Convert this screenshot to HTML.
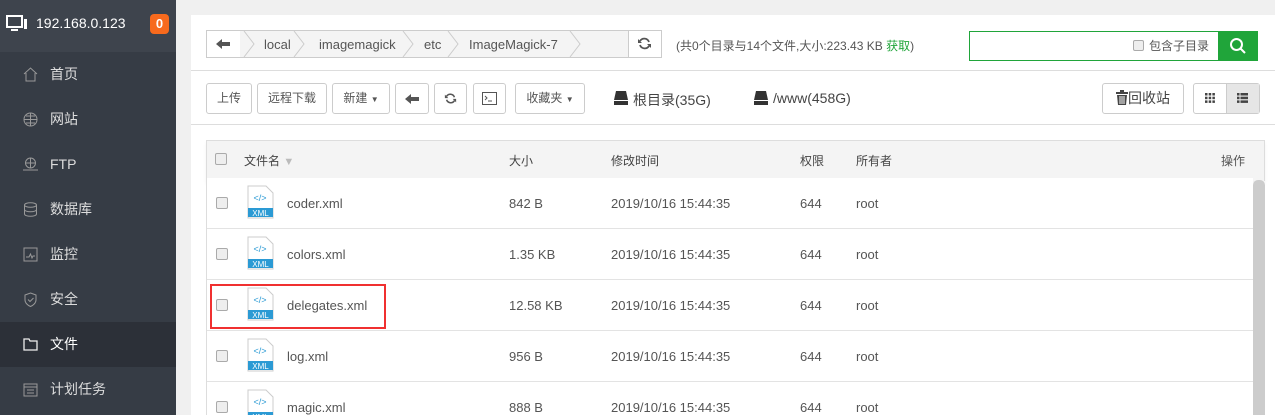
<!DOCTYPE html><html><head><meta charset="utf-8"><style>
*{box-sizing:border-box;margin:0;padding:0}
html,body{width:1275px;height:415px;overflow:hidden}
body{background:#f0f0f0;font-family:"Liberation Sans","Noto Sans CJK SC",sans-serif;font-size:12px;color:#555;position:relative}
.abs{position:absolute}
#side{left:0;top:0;width:176px;height:415px;background:#363c45}
#sh{left:0;top:0;width:176px;height:52px;background:#3e444d;color:#fff;font-size:14px}
.nav{left:0;width:176px;height:45px;color:#ddd;font-size:14px;line-height:45px;padding-left:50px}
.nav.on{background:#2c3038;color:#fff}
.ic{position:absolute;left:23px;top:15px;width:15px;height:15px}
#panel{left:191px;top:15px;width:1084px;height:400px;background:#fff}
.btn{position:absolute;top:83px;height:31px;border:1px solid #ccc;border-radius:3px;background:#fff;line-height:29px;text-align:center;color:#555;font-size:12px}
.hr{left:191px;width:1084px;height:1px;background:#ddd}
.row{left:207px;width:1046px;height:51px;border-bottom:1px solid #e3e3e3;background:#fff}
.cb{position:absolute;left:9px;width:12px;height:12px;border:1px solid #aaa;border-radius:2px;background:#eee}
.cell{position:absolute;line-height:51px;font-size:13px;color:#555}
.xml{position:absolute;left:40px;top:7px;width:28px;height:34px}
</style></head><body>
<div id="side" class="abs"></div>
<div id="sh" class="abs">
<svg class="abs" style="left:6px;top:15px" width="22" height="18"><rect x="1" y="1" width="15" height="11" fill="none" stroke="#fff" stroke-width="2"/><rect x="5" y="14" width="7" height="2" fill="#fff"/><rect x="18" y="4" width="3" height="10" fill="#fff"/></svg>
<div class="abs" style="left:36px;top:15px">192.168.0.123</div>
<div class="abs" style="left:150px;top:14px;width:19px;height:20px;background:#f76a1d;border-radius:4px;text-align:center;line-height:20px;font-weight:bold;font-size:13px">0</div>
</div>
<div class="abs nav" style="top:52px"><svg class="ic" viewBox="0 0 15 15"><path d="M1 7L7.5 1L14 7M3 6v8h9V6" fill="none" stroke="#999"/></svg>首页</div>
<div class="abs nav" style="top:97px"><svg class="ic" viewBox="0 0 15 15"><circle cx="7.5" cy="7.5" r="6.5" fill="none" stroke="#999"/><path d="M1 7.5h13M7.5 1v13M3 4h9M3 11h9" stroke="#999" fill="none"/></svg>网站</div>
<div class="abs nav" style="top:142px"><svg class="ic" viewBox="0 0 15 15"><circle cx="7.5" cy="6" r="5" fill="none" stroke="#999"/><path d="M2.5 6h10M7.5 1v10M0 13h15" stroke="#999"/></svg>FTP</div>
<div class="abs nav" style="top:187px"><svg class="ic" viewBox="0 0 15 15"><ellipse cx="7.5" cy="3" rx="6" ry="2.3" fill="none" stroke="#999"/><path d="M1.5 3v9c0 3 12 3 12 0V3M1.5 7.5c0 3 12 3 12 0" fill="none" stroke="#999"/></svg>数据库</div>
<div class="abs nav" style="top:232px"><svg class="ic" viewBox="0 0 15 15"><rect x="1" y="1" width="13" height="13" fill="none" stroke="#999"/><path d="M3 10h3l1.5-3 1.5 4 1-2h2" fill="none" stroke="#999"/></svg>监控</div>
<div class="abs nav" style="top:277px"><svg class="ic" viewBox="0 0 15 15"><path d="M7.5 1L13 3v5c0 3-3 5.5-5.5 6.5C5 13.5 2 11 2 8V3z" fill="none" stroke="#999"/><path d="M5 7.5l2 2 3.5-3.5" fill="none" stroke="#999"/></svg>安全</div>
<div class="abs nav on" style="top:322px"><svg class="ic" viewBox="0 0 15 15"><path d="M1 2h5l1 2h7v9H1z" fill="none" stroke="#eee" stroke-width="1.3"/></svg>文件</div>
<div class="abs nav" style="top:367px"><svg class="ic" viewBox="0 0 15 15"><rect x="1" y="2" width="13" height="12" fill="none" stroke="#999"/><path d="M1 5h13M4 8h7M4 11h7" stroke="#999"/></svg>计划任务</div>

<div id="panel" class="abs"></div>
<div class="abs" style="left:206px;top:30px;width:456px;height:28px;border:1px solid #ccc;background:#f4f4f4"></div>
<div class="abs" style="left:207px;top:31px;width:33px;height:26px;background:#fff"></div>
<svg class="abs" style="left:216px;top:38px" width="14" height="12"><path d="M0 6l6-5v3h8v4H6v3z" fill="#555"/></svg>
<div class="abs" style="left:628px;top:31px;width:33px;height:26px;background:#fff;border-left:1px solid #ccc"></div>
<svg class="abs" style="left:637px;top:36px" width="15" height="15" viewBox="0 0 15 15"><path d="M12 6A5 5 0 0 0 3 5M3 9a5 5 0 0 0 9 1" fill="none" stroke="#555" stroke-width="1.8"/><path d="M1 3v4h4zM14 12V8h-4z" fill="#555"/></svg>
<svg class="abs" style="left:240px;top:31px" width="390" height="26"><g fill="none" stroke="#ccc"><path d="M4 0l10 13-10 13"/><path d="M54 0l10 13-10 13"/><path d="M163 0l10 13-10 13"/><path d="M208 0l10 13-10 13"/><path d="M330 0l10 13-10 13"/></g></svg>
<div class="abs" style="left:264px;top:37px;font-size:13px;color:#555">local</div>
<div class="abs" style="left:319px;top:37px;font-size:13px;color:#555">imagemagick</div>
<div class="abs" style="left:424px;top:37px;font-size:13px;color:#555">etc</div>
<div class="abs" style="left:469px;top:37px;font-size:13px;color:#555">ImageMagick-7</div>
<div class="abs" style="left:676px;top:37px;font-size:12px;color:#555">(共0个目录与14个文件,大小:223.43 KB <span style="color:#20a53a">获取</span>)</div>
<div class="abs" style="left:969px;top:31px;width:289px;height:30px;border:1px solid #20a53a;background:#fff"></div>
<div class="abs" style="left:1133px;top:40px;width:11px;height:11px;border:1px solid #aaa;border-radius:2px;background:#eee"></div>
<div class="abs" style="left:1149px;top:37px;font-size:12px;color:#555">包含子目录</div>
<div class="abs" style="left:1218px;top:31px;width:40px;height:30px;background:#20a53a"></div>
<svg class="abs" style="left:1229px;top:37px" width="18" height="18"><circle cx="7.5" cy="7.5" r="5.5" fill="none" stroke="#fff" stroke-width="2"/><path d="M11.5 11.5l4.5 4.5" stroke="#fff" stroke-width="2"/></svg>
<div class="abs hr" style="top:70px"></div>
<div class="btn" style="left:206px;width:46px">上传</div>
<div class="btn" style="left:257px;width:70px">远程下载</div>
<div class="btn" style="left:332px;width:58px">新建 <span style="font-size:8px">▼</span></div>
<div class="btn" style="left:395px;width:34px"><svg style="margin-top:9px" width="14" height="12"><path d="M0 6l6-5v3h8v4H6v3z" fill="#555"/></svg></div>
<div class="btn" style="left:434px;width:33px"><svg style="margin-top:8px" width="13" height="13" viewBox="0 0 15 15"><path d="M12 6A5 5 0 0 0 3 5M3 9a5 5 0 0 0 9 1" fill="none" stroke="#555" stroke-width="1.8"/><path d="M1 3v4h4zM14 12V8h-4z" fill="#555"/></svg></div>
<div class="btn" style="left:473px;width:33px"><svg style="margin-top:8px" width="15" height="13"><rect x=".5" y=".5" width="14" height="12" fill="none" stroke="#555"/><path d="M3 4l2 2-2 2M6 9h4" stroke="#555" fill="none"/></svg></div>
<div class="btn" style="left:515px;width:70px">收藏夹 <span style="font-size:8px">▼</span></div>
<svg class="abs" style="left:613px;top:91px" width="16" height="15"><path d="M3 0h10l2 9H1z" fill="#333"/><rect x="1" y="10" width="14" height="4" fill="#333"/></svg>
<div class="abs" style="left:633px;top:90px;font-size:14px;color:#444">根目录(35G)</div>
<svg class="abs" style="left:753px;top:91px" width="16" height="15"><path d="M3 0h10l2 9H1z" fill="#333"/><rect x="1" y="10" width="14" height="4" fill="#333"/></svg>
<div class="abs" style="left:773px;top:90px;font-size:14px;color:#444">/www(458G)</div>
<div class="btn" style="left:1102px;width:82px;font-size:14px;color:#444"><svg width="12" height="15" style="vertical-align:-2px"><rect x="0" y="2" width="12" height="2" fill="#444"/><rect x="4" y="0" width="4" height="2" fill="#444"/><path d="M1 5h10l-1 10H2z" fill="#444"/><path d="M4 6v8M6 6v8M8 6v8" stroke="#fff"/></svg>回收站</div>
<div class="btn" style="left:1193px;width:67px;border-color:#ccc"></div>
<div class="abs" style="left:1226px;top:84px;width:33px;height:29px;background:#e6e6e6;border-left:1px solid #ccc"></div>
<svg class="abs" style="left:1205px;top:93px" width="10" height="10"><g fill="#444"><rect x="0" y="0" width="2.5" height="2.5"/><rect x="3.7" y="0" width="2.5" height="2.5"/><rect x="7.4" y="0" width="2.5" height="2.5"/><rect x="0" y="3.7" width="2.5" height="2.5"/><rect x="3.7" y="3.7" width="2.5" height="2.5"/><rect x="7.4" y="3.7" width="2.5" height="2.5"/><rect x="0" y="7.4" width="2.5" height="2.5"/><rect x="3.7" y="7.4" width="2.5" height="2.5"/><rect x="7.4" y="7.4" width="2.5" height="2.5"/></g></svg>
<svg class="abs" style="left:1237px;top:93px" width="11" height="10"><g fill="#444"><rect x="0" y="0" width="2.5" height="2.5"/><rect x="3.5" y="0" width="7.5" height="2.5"/><rect x="0" y="3.7" width="2.5" height="2.5"/><rect x="3.5" y="3.7" width="7.5" height="2.5"/><rect x="0" y="7.4" width="2.5" height="2.5"/><rect x="3.5" y="7.4" width="7.5" height="2.5"/></g></svg>
<div class="abs hr" style="top:124px"></div>
<div class="abs" style="left:206px;top:140px;width:1059px;height:41px;background:#f4f4f4;border:1px solid #ddd;border-bottom:none;box-shadow:0 3px 3px rgba(0,0,0,.06)"></div>
<div class="abs" style="left:215px;top:153px;width:12px;height:12px;border:1px solid #aaa;border-radius:2px;background:#eee"></div>
<div class="abs" style="left:244px;top:152px;color:#444;font-size:12px">文件名 <span style="color:#bbb;font-size:11px">▼</span></div>
<div class="abs" style="left:509px;top:152px;color:#444">大小</div>
<div class="abs" style="left:611px;top:152px;color:#444">修改时间</div>
<div class="abs" style="left:800px;top:152px;color:#444">权限</div>
<div class="abs" style="left:856px;top:152px;color:#444">所有者</div>
<div class="abs" style="left:1221px;top:152px;color:#555">操作</div>
<div class="abs" style="left:206px;top:181px;width:1px;height:234px;background:#ddd"></div>
<div class="abs" style="left:1253px;top:180px;width:12px;height:235px;background:#ccc;border-radius:5px 5px 0 0"></div>

<div class="abs row" style="top:178px"><div class="cb" style="top:19px"></div><svg class="xml" viewBox="0 0 28 34"><path d="M1 1h18l7 7v25H1z" fill="#fff" stroke="#ccc"/><rect x="1" y="23" width="25" height="9" fill="#2b9ad4"/><text x="13.5" y="31" font-size="8" fill="#fff" text-anchor="middle" font-family="Liberation Sans">XML</text><text x="13" y="16" font-size="9" fill="#2b9ad4" text-anchor="middle" font-family="Liberation Sans">&lt;/&gt;</text></svg><div class="cell" style="left:80px">coder.xml</div><div class="cell" style="left:302px">842 B</div><div class="cell" style="left:404px">2019/10/16 15:44:35</div><div class="cell" style="left:593px">644</div><div class="cell" style="left:649px">root</div></div>
<div class="abs row" style="top:229px"><div class="cb" style="top:19px"></div><svg class="xml" viewBox="0 0 28 34"><path d="M1 1h18l7 7v25H1z" fill="#fff" stroke="#ccc"/><rect x="1" y="23" width="25" height="9" fill="#2b9ad4"/><text x="13.5" y="31" font-size="8" fill="#fff" text-anchor="middle" font-family="Liberation Sans">XML</text><text x="13" y="16" font-size="9" fill="#2b9ad4" text-anchor="middle" font-family="Liberation Sans">&lt;/&gt;</text></svg><div class="cell" style="left:80px">colors.xml</div><div class="cell" style="left:302px">1.35 KB</div><div class="cell" style="left:404px">2019/10/16 15:44:35</div><div class="cell" style="left:593px">644</div><div class="cell" style="left:649px">root</div></div>
<div class="abs row" style="top:280px"><div class="cb" style="top:19px"></div><svg class="xml" viewBox="0 0 28 34"><path d="M1 1h18l7 7v25H1z" fill="#fff" stroke="#ccc"/><rect x="1" y="23" width="25" height="9" fill="#2b9ad4"/><text x="13.5" y="31" font-size="8" fill="#fff" text-anchor="middle" font-family="Liberation Sans">XML</text><text x="13" y="16" font-size="9" fill="#2b9ad4" text-anchor="middle" font-family="Liberation Sans">&lt;/&gt;</text></svg><div class="cell" style="left:80px">delegates.xml</div><div class="cell" style="left:302px">12.58 KB</div><div class="cell" style="left:404px">2019/10/16 15:44:35</div><div class="cell" style="left:593px">644</div><div class="cell" style="left:649px">root</div></div>
<div class="abs row" style="top:331px"><div class="cb" style="top:19px"></div><svg class="xml" viewBox="0 0 28 34"><path d="M1 1h18l7 7v25H1z" fill="#fff" stroke="#ccc"/><rect x="1" y="23" width="25" height="9" fill="#2b9ad4"/><text x="13.5" y="31" font-size="8" fill="#fff" text-anchor="middle" font-family="Liberation Sans">XML</text><text x="13" y="16" font-size="9" fill="#2b9ad4" text-anchor="middle" font-family="Liberation Sans">&lt;/&gt;</text></svg><div class="cell" style="left:80px">log.xml</div><div class="cell" style="left:302px">956 B</div><div class="cell" style="left:404px">2019/10/16 15:44:35</div><div class="cell" style="left:593px">644</div><div class="cell" style="left:649px">root</div></div>
<div class="abs row" style="top:382px;height:33px;border-bottom:none"><div class="cb" style="top:19px"></div><svg class="xml" viewBox="0 0 28 34"><path d="M1 1h18l7 7v25H1z" fill="#fff" stroke="#ccc"/><rect x="1" y="23" width="25" height="9" fill="#2b9ad4"/><text x="13.5" y="31" font-size="8" fill="#fff" text-anchor="middle" font-family="Liberation Sans">XML</text><text x="13" y="16" font-size="9" fill="#2b9ad4" text-anchor="middle" font-family="Liberation Sans">&lt;/&gt;</text></svg><div class="cell" style="left:80px">magic.xml</div><div class="cell" style="left:302px">888 B</div><div class="cell" style="left:404px">2019/10/16 15:44:35</div><div class="cell" style="left:593px">644</div><div class="cell" style="left:649px">root</div></div>
<div class="abs" style="left:210px;top:284px;width:176px;height:45px;border:2px solid #f03030"></div>
</body></html>
